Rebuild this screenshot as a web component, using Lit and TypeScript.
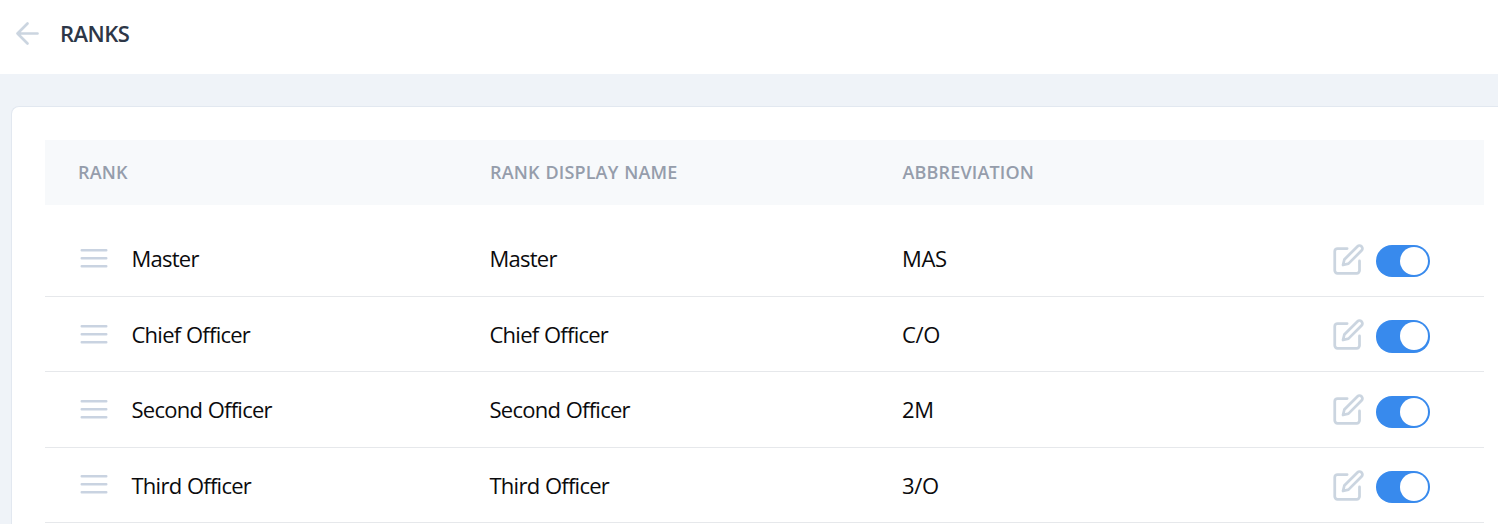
import { LitElement, html, css } from "lit";
import { customElement, property } from "lit/decorators.js";

@customElement("rank-row")
class RankRow extends LitElement {
  @property() name = "";
  @property() abbr = "";

  static styles = css`
    :host {
      display: grid;
      grid-template-columns: 86.5px 358px 412.5px 1fr auto;
      align-items: center;
      box-sizing: border-box;
      height: 75.4px;
      padding-right: 54px;
      border-bottom: 1px solid #e6e8eb;
      font-size: 22px;
      line-height: 30px;
      color: #0b0b0d;
    }
    .text { letter-spacing: -0.75px; word-spacing: 0.6px; white-space: nowrap; padding-bottom: 0.6px; }
    .abbr { letter-spacing: -0.3px; }
    .grip { display: block; margin: 0 0 1px 35px; }
    .actions { display: flex; align-items: center; gap: 11px; grid-column: 5; }
    .pencil { margin-top: 1px; }
    .toggle {
      display: flex;
      justify-content: flex-end;
      box-sizing: border-box;
      width: 54px;
      height: 32.4px;
      margin-top: 4.6px;
      padding: 2.2px 2px;
      border-radius: 16.2px;
      background: #388aed;
    }
    .knob { width: 28px; height: 28px; border-radius: 50%; background: #fff; }
  `;

  render() {
    return html`
      <svg class="grip" width="28" height="20" viewBox="0 0 28 20" fill="none" stroke="#c9d3e1" stroke-width="2.4" stroke-linecap="round">
        <path d="M1.7 2.2h24.6M1.7 10.2h24.6M1.7 18.2h24.6" />
      </svg>
      <span class="text">${this.name}</span>
      <span class="text">${this.name}</span>
      <span class="text abbr">${this.abbr}</span>
      <div class="actions">
        <svg class="pencil" width="33" height="33" viewBox="0 0 24 24" fill="none" stroke="#cbd5e0" stroke-width="2" stroke-linecap="round" stroke-linejoin="round">
          <path d="M11 4H4a2 2 0 0 0-2 2v14a2 2 0 0 0 2 2h14a2 2 0 0 0 2-2v-7" />
          <path d="M18.5 2.5a2.121 2.121 0 0 1 3 3L12 15l-4 1 1-4 9.5-9.5z" />
        </svg>
        <div class="toggle"><div class="knob"></div></div>
      </div>
    `;
  }
}

@customElement("app-root")
class AppRoot extends LitElement {
  static styles = css`
    :host {
      display: flex;
      flex-direction: column;
      height: 524px;
      overflow: hidden;
      background: #eff3f8;
      font-family: "Segoe UI", "Open Sans", "Noto Sans", sans-serif;
    }
    .bar {
      display: flex;
      align-items: center;
      flex: none;
      box-sizing: border-box;
      height: 74px;
      padding: 0 0 6px 13px;
      background: #fff;
    }
    .title {
      margin: 0 0 2px 19px;
      font-size: 22px;
      line-height: 30px;
      font-weight: 600;
      letter-spacing: -0.5px;
      color: #2d3748;
    }
    .card {
      flex: 1;
      margin: 32px 0 0 11px;
      padding: 33px 14px 0 33px;
      border: 1px solid #e2e8f0;
      border-width: 1px 0 0 1px;
      border-top-left-radius: 8px;
      background: #fff;
    }
    .head {
      display: grid;
      grid-template-columns: 412px 412.5px 1fr;
      align-items: center;
      box-sizing: border-box;
      height: 65px;
      margin-bottom: 16.5px;
      padding: 0 0 1px 33px;
      background: #f7f9fb;
      color: #959dab;
      font-size: 18px;
      font-weight: 600;
      letter-spacing: 0.15px;
      word-spacing: 1px;
      white-space: nowrap;
    }
  `;

  private ranks = [
    ["Master", "MAS"],
    ["Chief Officer", "C/O"],
    ["Second Officer", "2M"],
    ["Third Officer", "3/O"],
  ];

  render() {
    return html`
      <header class="bar">
        <svg width="28" height="28" viewBox="0 0 28 28" fill="none" stroke="#cbd5e0" stroke-width="2.7" stroke-linecap="round" stroke-linejoin="round">
          <path d="M24.5 13.5H4.5M14.5 3.5L4.5 13.5L14.5 23.5" />
        </svg>
        <h1 class="title">RANKS</h1>
      </header>
      <main class="card">
        <div class="head"><span>RANK</span><span>RANK DISPLAY NAME</span><span>ABBREVIATION</span></div>
        ${this.ranks.map(([name, abbr]) => html`<rank-row .name=${name} .abbr=${abbr}></rank-row>`)}
      </main>
    `;
  }
}
